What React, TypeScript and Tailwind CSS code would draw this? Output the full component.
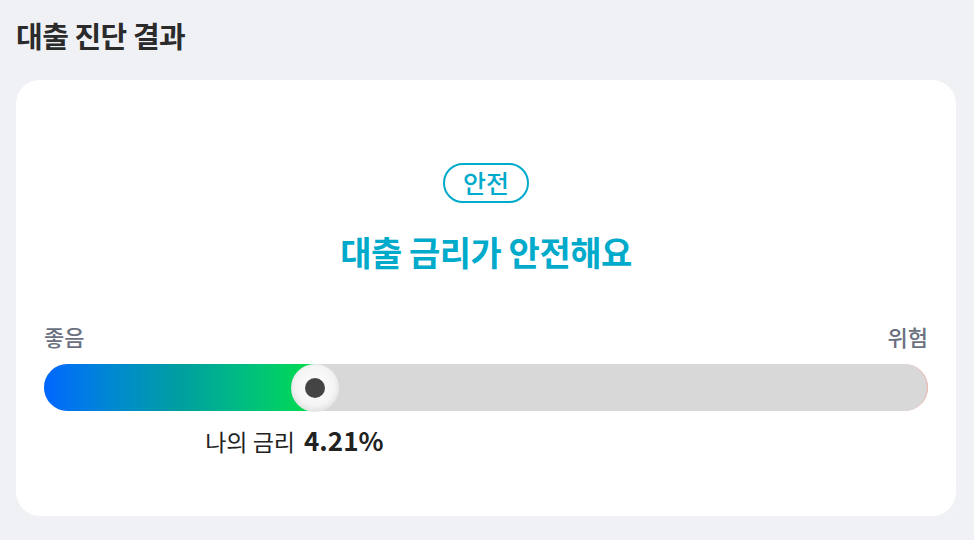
export default function App() {
  const rate = 4.21;
  const percent = 30.7;

  return (
    <div
      className="min-h-screen w-full bg-[#f0f1f5] pl-4 pr-[18px] pt-[15px]"
      style={{ fontFamily: '"Noto Sans CJK KR", "Noto Sans", sans-serif' }}
    >
      <h1 className="text-[29px] font-bold leading-[40px] tracking-[-0.5px] text-[#2b2b2b]">대출 진단 결과</h1>

      <div className="mt-[25px] h-[436px] rounded-[24px] bg-white px-[28px] pt-[83px]">
        <div className="flex flex-col items-center">
          <span className="flex h-[40px] items-center rounded-full border-2 border-[#00aacb] px-[18px] text-[25px] font-medium text-[#00aacb]">
            안전
          </span>
          <p className="mt-[29px] text-[34px] font-bold leading-[40px] tracking-[-0.5px] text-[#00aacb]">
            대출 금리가 안전해요
          </p>
        </div>

        <div className="mt-[48px] flex h-[32px] items-center justify-between text-[22px] font-medium text-[#6b7080]">
          <span>좋음</span>
          <span>위험</span>
        </div>

        <div className="relative mt-[12px] h-[47px] rounded-full bg-[#d8d8d8]">
          <div className="absolute inset-y-0 right-0 w-[30px] rounded-r-full border-r border-[#f0b4aa]" />
          <div
            className="h-full rounded-l-full bg-gradient-to-r from-[#0066ff] via-[#009ea0] to-[#00dd44]"
            style={{ width: `${percent}%` }}
          />
          <div
            className="absolute top-1/2 flex h-[48px] w-[48px] -translate-x-1/2 -translate-y-1/2 items-center justify-center rounded-full bg-[radial-gradient(circle_at_50%_45%,#ffffff_0%,#f4f4f4_55%,#c9c9c9_100%)]"
            style={{ left: `${percent}%` }}
          >
            <div className="h-[20px] w-[20px] rounded-full bg-[#444444]" />
          </div>
        </div>

        <div className="relative mt-[12px] h-[34px]">
          <div
            className="absolute flex -translate-x-1/2 items-baseline gap-[9px] whitespace-nowrap leading-[34px] text-[#222222]"
            style={{ left: `calc(${percent}% - 21px)` }}
          >
            <span className="text-[23px]">나의 금리</span>
            <span className="text-[26px] font-bold">{rate}%</span>
          </div>
        </div>
      </div>
    </div>
  );
}
